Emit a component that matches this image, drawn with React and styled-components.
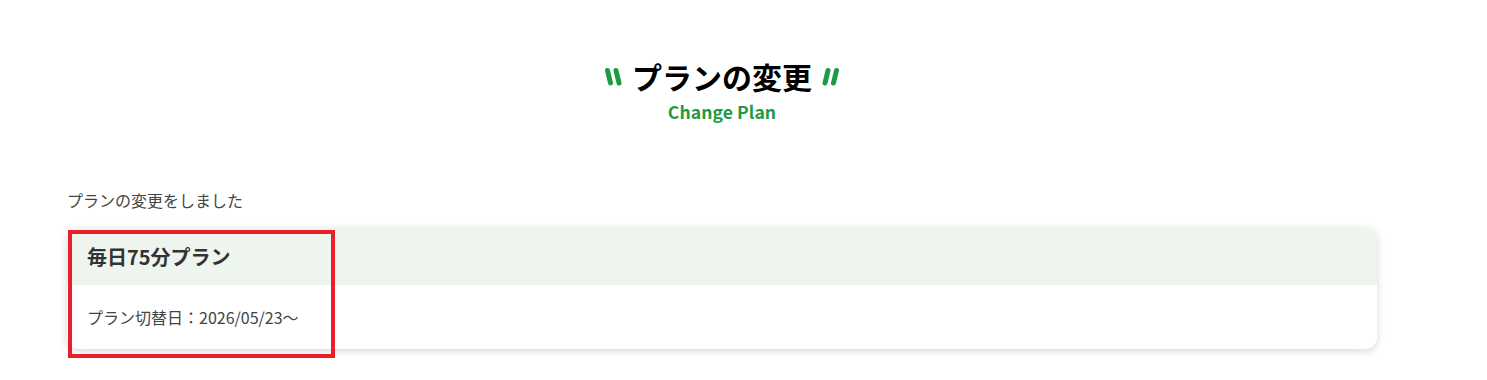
import React from 'react'
import styled, { createGlobalStyle } from 'styled-components'

const GlobalStyle = createGlobalStyle`
  body {
    margin: 0;
    background: #ffffff;
    font-family: "Noto Sans CJK JP", "Noto Sans", sans-serif;
    color: #333333;
  }
`

function QuoteMark({ flip }) {
  return (
    <Quote viewBox='0 0 20 20' $flip={flip}>
      <path d='M3.5 3.5 L6.5 16' />
      <path d='M12 3.5 L15 16' />
    </Quote>
  )
}

function App() {
  return (
    <Page>
      <GlobalStyle />
      <Heading>
        <TitleRow>
          <QuoteMark />
          <Title>プランの変更</Title>
          <QuoteMark flip />
        </TitleRow>
        <SubTitle>Change Plan</SubTitle>
      </Heading>
      <Message>プランの変更をしました</Message>
      <CardWrap>
        <Card>
          <CardHeader>毎日75分プラン</CardHeader>
          <CardBody>プラン切替日：2026/05/23〜</CardBody>
        </Card>
        <Highlight />
      </CardWrap>
    </Page>
  )
}

export default App

const Page = styled.div`
  width: 1310px;
  padding: 57px 0 30px 67px;
`
const Heading = styled.div`
  display: flex;
  flex-direction: column;
  align-items: center;
`
const TitleRow = styled.div`
  display: flex;
  align-items: center;
  gap: 8px;
`
const Title = styled.h1`
  margin: 0;
  font-size: 30px;
  font-weight: 700;
  line-height: 38px;
  color: #000000;
`
const Quote = styled.svg`
  width: 20px;
  height: 20px;
  margin-top: 1px;
  transform: ${(props) => (props.$flip ? 'scaleX(-1)' : 'none')};
  path {
    stroke: #1e9a43;
    stroke-width: 5;
    stroke-linecap: round;
    fill: none;
  }
`
const SubTitle = styled.div`
  margin-top: 5px;
  font-size: 17.5px;
  font-weight: 700;
  line-height: 24px;
  letter-spacing: 0.1px;
  color: #1e9a43;
`
const Message = styled.p`
  margin: 65px 0 17px;
  font-size: 16px;
  line-height: 22px;
  color: #444444;
`
const CardWrap = styled.div`
  position: relative;
`
const Card = styled.div`
  border-radius: 12px;
  overflow: hidden;
  background: #ffffff;
  box-shadow: 0 2px 8px rgba(0, 0, 0, 0.16);
`
const CardHeader = styled.div`
  display: flex;
  align-items: center;
  height: 57px;
  padding: 0 20px;
  background: #eef5ee;
  font-size: 20px;
  font-weight: 700;
  color: #333333;
`
const CardBody = styled.div`
  display: flex;
  align-items: center;
  height: 64px;
  padding: 0 20px;
  font-size: 16px;
  color: #444444;
`
const Highlight = styled.div`
  position: absolute;
  left: 1px;
  top: 2px;
  width: 259px;
  height: 120px;
  border: 4px solid #e8202a;
  pointer-events: none;
`
